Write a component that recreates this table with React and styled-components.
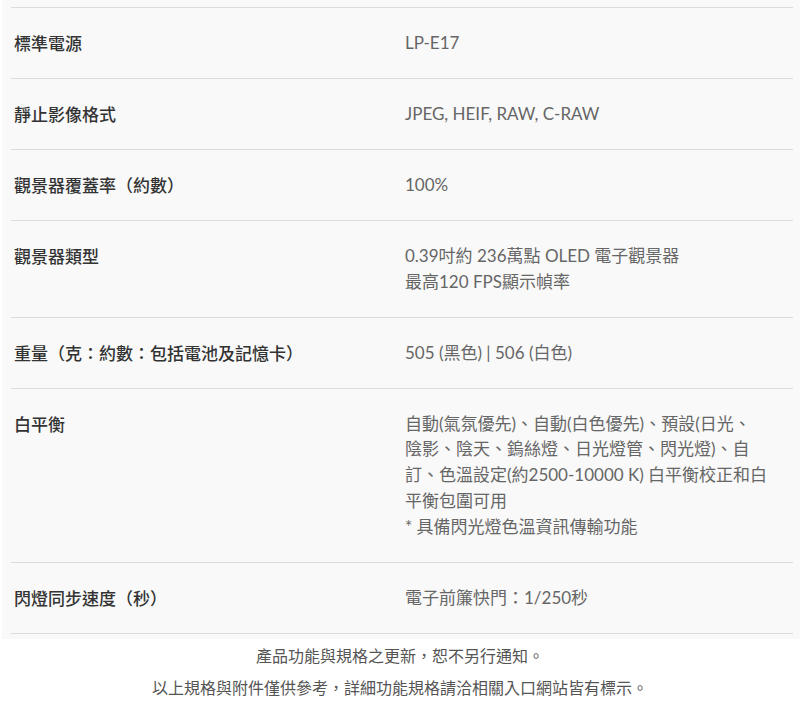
import styled, { createGlobalStyle } from "styled-components";

const GlobalStyle = createGlobalStyle`
  body {
    margin: 0;
    background: #fff;
    font-family: Lato, "Noto Sans CJK TC", sans-serif;
  }
`;

const Panel = styled.div`
  margin-left: 2px;
  padding: 7px 7px 5px 9px;
  background: #f9f9f9;
`;

const Row = styled.div`
  display: grid;
  grid-template-columns: 1fr 1fr;
  padding: 22px 0;
  border-top: 1px solid #dcdcdc;

  &:last-child {
    border-bottom: 1px solid #dcdcdc;
  }
`;

const Label = styled.div`
  padding-left: 3px;
  font-family: "Noto Sans CJK TC", sans-serif;
  font-size: 17px;
  font-weight: 500;
  line-height: 26px;
  color: #333;
`;

const Value = styled.div`
  padding: 0 10px 0 3px;
  font-size: 17px;
  line-height: 25.8px;
  color: #666;
`;

const Notes = styled.div`
  text-align: center;
  font-family: "Noto Sans CJK TC", sans-serif;
  font-size: 16px;
  line-height: 32px;
  color: #555;
`;

const specs = [
  { label: "標準電源", value: ["LP-E17"] },
  { label: "靜止影像格式", value: ["JPEG, HEIF, RAW, C-RAW"] },
  { label: "觀景器覆蓋率（約數）", value: ["100%"] },
  { label: "觀景器類型", value: ["0.39吋約 236萬點 OLED 電子觀景器", "最高120 FPS顯示幀率"] },
  { label: "重量（克：約數：包括電池及記憶卡）", value: ["505 (黑色) | 506 (白色)"] },
  {
    label: "白平衡",
    value: [
      "自動(氣氛優先)、自動(白色優先)、預設(日光、",
      "陰影、陰天、鎢絲燈、日光燈管、閃光燈)、自",
      "訂、色溫設定(約2500-10000 K) 白平衡校正和白",
      "平衡包圍可用",
      "* 具備閃光燈色溫資訊傳輸功能",
    ],
  },
  { label: "閃燈同步速度（秒）", value: ["電子前簾快門：1/250秒"] },
];

export default function App() {
  return (
    <>
      <GlobalStyle />
      <Panel>
        {specs.map((spec) => (
          <Row key={spec.label}>
            <Label>{spec.label}</Label>
            <Value>
              {spec.value.map((line) => (
                <div key={line}>{line}</div>
              ))}
            </Value>
          </Row>
        ))}
      </Panel>
      <Notes>
        <div>產品功能與規格之更新，恕不另行通知。</div>
        <div>以上規格與附件僅供參考，詳細功能規格請洽相關入口網站皆有標示。</div>
      </Notes>
    </>
  );
}
